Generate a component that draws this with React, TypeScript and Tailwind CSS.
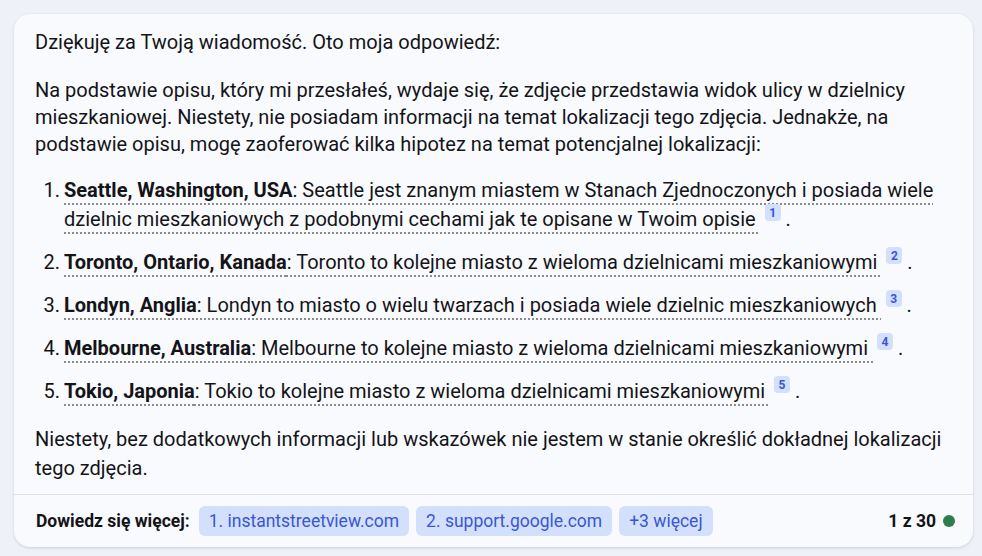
import React from "react";

const items = [
  {
    b: "Seattle, Washington, USA",
    t: ": Seattle jest znanym miastem w Stanach Zjednoczonych i posiada wiele dzielnic mieszkaniowych z podobnymi cechami jak te opisane w Twoim opisie ",
  },
  { b: "Toronto, Ontario, Kanada", t: ": Toronto to kolejne miasto z wieloma dzielnicami mieszkaniowymi " },
  { b: "Londyn, Anglia", t: ": Londyn to miasto o wielu twarzach i posiada wiele dzielnic mieszkaniowych " },
  { b: "Melbourne, Australia", t: ": Melbourne to kolejne miasto z wieloma dzielnicami mieszkaniowymi " },
  { b: "Tokio, Japonia", t: ": Tokio to kolejne miasto z wieloma dzielnicami mieszkaniowymi " },
];

function Badge({ n }: { n: number }) {
  return (
    <span className="relative -top-[8px] ml-[4px] inline-flex h-[17px] w-[16px] items-center justify-center rounded-[4px] bg-[#d3e0fb] align-middle text-[12px] font-bold leading-none text-[#3a56d4]">
      {n}
    </span>
  );
}

export default function App() {
  return (
    <div
      className="min-h-[556px] w-[982px] bg-[#eef1f8] pl-[14px] pr-[9px] pt-[14px] pb-[9px]"
      style={{ fontFamily: "Roboto, 'Noto Sans', sans-serif" }}
    >
      <div className="flex h-[533px] flex-col rounded-[16px] bg-[#f9fafd] shadow-[0_1px_3px_rgba(60,64,90,0.18)]">
        <div className="flex-1 px-[21px] pt-[15px] text-[20px] leading-[27px] text-[#141418]">
          <p>Dziękuję za Twoją wiadomość. Oto moja odpowiedź:</p>
          <p className="mt-[21px] pr-[30px]">
            Na podstawie opisu, który mi przesłałeś, wydaje się, że zdjęcie przedstawia widok ulicy w dzielnicy mieszkaniowej. Niestety, nie posiadam informacji na temat lokalizacji tego zdjęcia. Jednakże, na podstawie opisu, mogę zaoferować kilka hipotez na temat potencjalnej lokalizacji:
          </p>
          <ol className="mt-[18px] flex flex-col gap-[14px]">
            {items.map((it, i) => (
              <li key={i} className="flex leading-[29px]">
                <span className="w-[29px] shrink-0 pr-[4px] text-right">{i + 1}.</span>
                <span className="pr-[4px]">
                  <span className="underline decoration-[#8c8c8c] decoration-dotted decoration-[1.5px] underline-offset-[6px]">
                    <b className="font-bold">{it.b}</b>
                    {it.t}
                  </span>
                  <Badge n={i + 1} /> .
                </span>
              </li>
            ))}
          </ol>
          <p className="mt-[19px] leading-[29px]">
            Niestety, bez dodatkowych informacji lub wskazówek nie jestem w stanie określić dokładnej lokalizacji tego zdjęcia.
          </p>
        </div>
        <div className="flex h-[53px] items-center border-t border-[#dde0e8] pl-[22px] pr-[18px]">
          <span className="mr-[9px] text-[17.5px] font-bold text-[#141418]">Dowiedz się więcej:</span>
          <div className="flex gap-[7px]">
            <span className="flex h-[30px] items-center rounded-[6px] bg-[#d3e0fb] px-[10px] text-[17.5px] text-[#3a56d4]">1. instantstreetview.com</span>
            <span className="flex h-[30px] items-center rounded-[6px] bg-[#d3e0fb] px-[10px] text-[17.5px] text-[#3a56d4]">2. support.google.com</span>
            <span className="flex h-[30px] items-center rounded-[6px] bg-[#d3e0fb] px-[10px] text-[17.5px] text-[#3a56d4]">+3 więcej</span>
          </div>
          <div className="ml-auto flex items-center gap-[7px]">
            <span className="text-[17.5px] font-bold text-[#141418]">1 z 30</span>
            <span className="h-[12px] w-[12px] rounded-full bg-[#2e7d4b]" />
          </div>
        </div>
      </div>
    </div>
  );
}
